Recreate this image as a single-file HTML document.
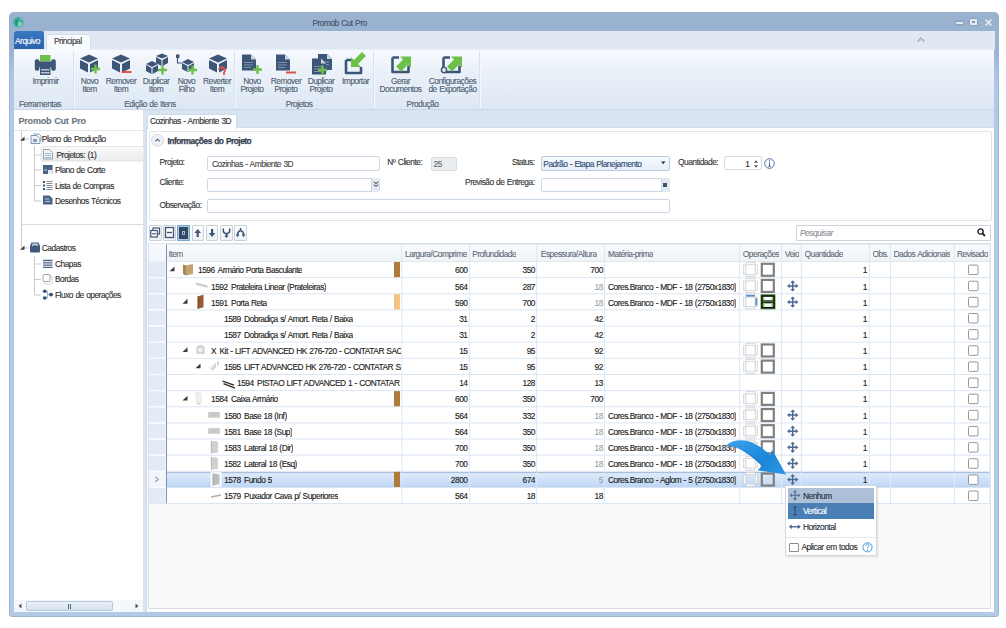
<!DOCTYPE html><html><head><meta charset="utf-8"><style>
*{box-sizing:border-box;margin:0;padding:0}
html,body{width:1006px;height:628px;overflow:hidden;background:#fff;font-family:"Liberation Sans",sans-serif;font-size:8.4px;letter-spacing:-0.5px;word-spacing:0.6px;color:#1e1e1e;-webkit-text-stroke:0.12px currentColor}
.a{position:absolute}
.t{position:absolute;white-space:nowrap;line-height:10px}
svg{position:absolute;overflow:visible}
#win{left:9px;top:12px;width:990px;height:605px;background:linear-gradient(#98b2d0 0,#98b2d0 36px,#b2cae6 70px,#b2cae6);border-radius:5px 5px 3px 3px;border:1px solid #9cb4d2}
#title{left:9px;top:12px;width:990px;height:19px;background:#98b2d0;border-radius:5px 5px 0 0}
#tabrow{left:14px;top:31px;width:981px;height:19px;background:#dfe8f3}
#ribbon{left:14px;top:49px;width:980px;height:61px;background:linear-gradient(#f7fafe,#ebf1f9 35%,#dee8f4);border-bottom:1px solid #c6d6e9;border-top:1px solid #e6edf6}
.sep{position:absolute;top:51px;width:1px;height:57px;background:#d8e2ee;box-shadow:1px 0 0 #f4f8fc}
.rl{color:#4d5d72}
.gl{color:#4d5d72}
#below{left:14px;top:110px;width:980px;height:502px;background:#d9e4f1}
#lp{left:14px;top:110px;width:129px;height:502px;background:#fff}
#mp{left:146px;top:127px;width:848px;height:485px;background:#fff;border-left:1px solid #c9d8ea;border-top:1px solid #cfdcec}
</style></head><body>
<div class="a" id="win"></div><div class="a" id="title"></div><div class="a" id="tabrow"></div><div class="a" id="ribbon"></div>
<div class="a" id="below"></div><div class="a" id="lp"></div><div class="a" id="mp"></div>
<svg style="left:12.5px;top:17px" width="11" height="11" viewBox="0 0 11 11"><circle cx="5.3" cy="5.3" r="4.8" fill="#8fd0c0" stroke="#2aa58c" stroke-width="0.9"/><path d="M2.2 2.5 Q4.5 0.8 7 1.5 L6.5 4 L5 5.5 L5.5 8 L3.5 9.3 Q1 7.5 1.2 5 Z" fill="#1f9f86"/><path d="M7.5 2.5 L9.3 4 L8.5 6 L7.2 5 Z" fill="#1f9f86"/></svg>
<div class="t " style="left:279.50px;width:120px;text-align:center;top:17.50px;color:#44546a">Promob Cut Pro</div>
<div class="a" style="left:956px;top:22px;width:7px;height:2px;background:#e4eaf1;box-shadow:0 0 1px 0.3px #6b7d94"></div>
<div class="a" style="left:970px;top:19px;width:7px;height:6px;border:2px solid #e4eaf1;box-shadow:0 0 1px 0.3px #6b7d94, inset 0 0 1px 0.3px #6b7d94"></div>
<svg style="left:985px;top:19px" width="7" height="7" viewBox="0 0 7 7"><path d="M0.5 0.5 L6.5 6.5 M6.5 0.5 L0.5 6.5" stroke="#e4eaf1" stroke-width="1.8" style="filter:drop-shadow(0 0 0.6px #6b7d94)"/></svg>
<div class="a" style="left:14px;top:31px;width:30px;height:18px;background:linear-gradient(#3a78c2,#2a62ad);border-radius:2px 2px 0 0"></div>
<div class="t " style="left:15px;top:35.50px;color:#fff">Arquivo</div>
<div class="a" style="left:46px;top:34px;width:45px;height:16px;background:#f8fbfe;border:1px solid #d2deec;border-bottom:none;border-radius:2px 2px 0 0"></div>
<div class="t " style="left:54px;top:36.00px;color:#3a3a3a">Principal</div>
<svg style="left:917px;top:37px" width="8" height="5" viewBox="0 0 8 5"><path d="M0.5 4.5 L4 1 L7.5 4.5" fill="none" stroke="#a3a8ae" stroke-width="1.2"/><path d="M2 4.8 L4 2.8 L6 4.8" fill="none" stroke="#c5c9ce" stroke-width="0.8"/></svg>
<div class="sep" style="left:73px"></div>
<div class="sep" style="left:234px"></div>
<div class="sep" style="left:373px"></div>
<div class="sep" style="left:479px"></div>
<svg style="left:0;top:0" width="1006" height="130"><rect x="40" y="55" width="10.5" height="6.5" fill="#6cc04a"/><rect x="34.8" y="59.3" width="4.6" height="11.5" rx="2" fill="#3d5677"/><rect x="51.2" y="59.3" width="4.6" height="11.5" rx="2" fill="#3d5677"/><rect x="36" y="61.5" width="18.5" height="5.5" fill="#3d5677"/><rect x="40" y="67" width="10.5" height="8" fill="#3d5677"/><rect x="41" y="69" width="8.5" height="1.5" fill="#b9c6d6"/><rect x="41" y="72" width="8.5" height="1.5" fill="#b9c6d6"/><path d="M89 54.5 L98 58.5 L89 62.5 L80 58.5 Z" fill="#3d5677"/><path d="M80 60.0 L88 64.0 L88 72.5 L80 68.5 Z" fill="#3d5677"/><path d="M90 64.0 L98 60.0 L98 68.5 L90 72.5 Z" fill="#3d5677"/><rect x="90" y="64" width="11" height="11" fill="#e9f0f8" opacity="0"/><path d="M91 69 H100 M95.5 64.5 V73.5" stroke="#6cc04a" stroke-width="2.4"/><path d="M121 54.5 L130 58.5 L121 62.5 L112 58.5 Z" fill="#3d5677"/><path d="M112 60.0 L120 64.0 L120 72.5 L112 68.5 Z" fill="#3d5677"/><path d="M122 64.0 L130 60.0 L130 68.5 L122 72.5 Z" fill="#3d5677"/><path d="M121.5 72 H131.5" stroke="#e0524a" stroke-width="2"/><path d="M146 64 L152 61 L158 64 L152 67 Z M146 65 L151.5 68 L151.5 74 L146 71 Z M152.5 68 L158 65 L158 71 L152.5 74 Z" fill="#3d5677"/><path d="M156 56 L162 53.5 L168 56 L162 58.5 Z M156 57 L161.5 60 L161.5 66 L156 63 Z M162.5 60 L168 57 L168 63 L162.5 66 Z" fill="#3d5677"/><path d="M158 70 H167 M162.5 65.5 V74.5" stroke="#6cc04a" stroke-width="2.4"/><rect x="176" y="54.5" width="3.5" height="3.5" fill="#3d5677"/><path d="M177.5 58 V63 H182" stroke="#3d5677" stroke-width="1.2" fill="none"/><path d="M182 62 L188 59 L194 62 L188 65 Z M182 63 L187.5 66 L187.5 72 L182 69 Z M188.5 66 L194 63 L194 69 L188.5 72 Z" fill="#3d5677"/><path d="M188 70 H197 M192.5 65.5 V74.5" stroke="#6cc04a" stroke-width="2.4"/><path d="M218 54.5 L227 58.5 L218 62.5 L209 58.5 Z" fill="#3d5677"/><path d="M209 60.0 L217 64.0 L217 72.5 L209 68.5 Z" fill="#3d5677"/><path d="M219 64.0 L227 60.0 L227 68.5 L219 72.5 Z" fill="#3d5677"/><path d="M219 70 A3 3 0 1 1 224 72.5 V75" stroke="#e0524a" stroke-width="1.8" fill="none"/><path d="M242 54.5 H251 L256 59.5 V70.5 H242 Z" fill="#3d5677"/><path d="M251 54.5 V59.5 H256" fill="#c9d5e3"/><path d="M244 62.5 H253 M244 65.0 H253 M244 67.5 H251" stroke="#8ea3bd" stroke-width="0.8"/><path d="M253 69.5 H262 M257.5 65.0 V74.0" stroke="#6cc04a" stroke-width="2.4"/><path d="M276 54.5 H285 L290 59.5 V70.5 H276 Z" fill="#3d5677"/><path d="M285 54.5 V59.5 H290" fill="#c9d5e3"/><path d="M278 62.5 H287 M278 65.0 H287 M278 67.5 H285" stroke="#8ea3bd" stroke-width="0.8"/><path d="M286 72.5 H296" stroke="#e0524a" stroke-width="2"/><path d="M318 54 H327 L332 59 V70 H318 Z" fill="#3d5677"/><path d="M327 54 V59 H332" fill="#c9d5e3"/><path d="M320 62 H329 M320 64.5 H329 M320 67 H327" stroke="#8ea3bd" stroke-width="0.8"/><path d="M312 58.5 H321 L326 63.5 V74.5 H312 Z" fill="#3d5677"/><path d="M321 58.5 V63.5 H326" fill="#c9d5e3"/><path d="M314 66.5 H323 M314 69.0 H323 M314 71.5 H321" stroke="#8ea3bd" stroke-width="0.8"/><path d="M318 70 H327 M322.5 65.5 V74.5" stroke="#6cc04a" stroke-width="2.4"/><path d="M346 60 H352 M346 60 V73 H361 V67" stroke="#3d5677" stroke-width="2.6" fill="none" stroke-linejoin="round"/><path d="M366 56 L358 64 L361 67 L351 67 L351 57 L354 60 L362 52 Z" fill="#6cc04a" transform="rotate(0)"/><path d="M392.5 57.5 H399 M392.5 57.5 V72.0 H408.5 V65.5" stroke="#3d5677" stroke-width="2.6" fill="none" stroke-linejoin="round"/><path d="M396 66.5 L403 59.5 L400 56.5 H411 V67.5 L408 64.5 L401 71.5 Z" fill="#6cc04a"/><path d="M443.5 57.5 H450 M443.5 57.5 V72.0 H459.5 V65.5" stroke="#3d5677" stroke-width="2.6" fill="none" stroke-linejoin="round"/><path d="M447 66.5 L454 59.5 L451 56.5 H462 V67.5 L459 64.5 L452 71.5 Z" fill="#6cc04a"/><circle cx="444" cy="70.0" r="2.6" fill="#e4ecf5" stroke="#3d5677" stroke-width="1.4"/></svg>
<div class="t rl" style="left:-14.50px;width:120px;text-align:center;top:75.50px;">Imprimir</div>
<div class="t rl" style="left:29.50px;width:120px;text-align:center;top:75.50px;">Novo</div>
<div class="t rl" style="left:29.50px;width:120px;text-align:center;top:84.00px;">Item</div>
<div class="t rl" style="left:61.00px;width:120px;text-align:center;top:75.50px;">Remover</div>
<div class="t rl" style="left:61.00px;width:120px;text-align:center;top:84.00px;">Item</div>
<div class="t rl" style="left:96.00px;width:120px;text-align:center;top:75.50px;">Duplicar</div>
<div class="t rl" style="left:96.00px;width:120px;text-align:center;top:84.00px;">Item</div>
<div class="t rl" style="left:126.50px;width:120px;text-align:center;top:75.50px;">Novo</div>
<div class="t rl" style="left:126.50px;width:120px;text-align:center;top:84.00px;">Filho</div>
<div class="t rl" style="left:157.00px;width:120px;text-align:center;top:75.50px;">Reverter</div>
<div class="t rl" style="left:157.00px;width:120px;text-align:center;top:84.00px;">Item</div>
<div class="t rl" style="left:192.00px;width:120px;text-align:center;top:75.50px;">Novo</div>
<div class="t rl" style="left:192.00px;width:120px;text-align:center;top:84.00px;">Projeto</div>
<div class="t rl" style="left:226.00px;width:120px;text-align:center;top:75.50px;">Remover</div>
<div class="t rl" style="left:226.00px;width:120px;text-align:center;top:84.00px;">Projeto</div>
<div class="t rl" style="left:261.00px;width:120px;text-align:center;top:75.50px;">Duplicar</div>
<div class="t rl" style="left:261.00px;width:120px;text-align:center;top:84.00px;">Projeto</div>
<div class="t rl" style="left:295.50px;width:120px;text-align:center;top:75.50px;">Importar</div>
<div class="t rl" style="left:340.50px;width:120px;text-align:center;top:75.50px;">Gerar</div>
<div class="t rl" style="left:340.50px;width:120px;text-align:center;top:84.00px;">Documentos</div>
<div class="t rl" style="left:392.50px;width:120px;text-align:center;top:75.50px;">Configurações</div>
<div class="t rl" style="left:392.50px;width:120px;text-align:center;top:84.00px;">de Exportação</div>
<div class="t gl" style="left:-20.00px;width:120px;text-align:center;top:98.50px;">Ferramentas</div>
<div class="t gl" style="left:90.00px;width:120px;text-align:center;top:98.50px;">Edição de Itens</div>
<div class="t gl" style="left:239.00px;width:120px;text-align:center;top:98.50px;">Projetos</div>
<div class="t gl" style="left:362.50px;width:120px;text-align:center;top:98.50px;">Produção</div>
<div class="t " style="left:18.5px;top:115.80px;font-weight:bold;font-size:9px;letter-spacing:-0.2px;color:#6b7786">Promob Cut Pro</div>
<div class="a" style="left:14px;top:130px;width:129px;height:1px;background:#dfe6ee"></div>
<svg style="left:0;top:0" width="150" height="620"><path d="M21.5 131 V248 M34.5 146 V201 M34.5 155 H41 M34.5 170 H41 M34.5 185.5 H41 M34.5 201 H41 M24 139 H29 M24 248 H29 M34.5 256 V295 M34.5 264 H41 M34.5 279.5 H41 M34.5 295 H41" stroke="#c9c9c9" stroke-width="1" fill="none"/><path d="M21.5 224.5 H143" stroke="#dcdcdc" stroke-width="1"/><path d="M24.5 136.5 V140.8 H20 Z" fill="#404040"/><path d="M24.5 245.5 V249.8 H20 Z" fill="#404040"/><rect x="41" y="146.5" width="103" height="14.5" rx="2" fill="url(#hl)" stroke="#dddddd" stroke-width="0.8"/><defs><linearGradient id="hl" x1="0" y1="0" x2="0" y2="1"><stop offset="0" stop-color="#f9f9f9"/><stop offset="1" stop-color="#ececec"/></linearGradient></defs><path d="M31 135.5 H37 L40 138.5 V143.5 H31 Z" fill="#eef2f7" stroke="#8297b2" stroke-width="1"/><path d="M33 134 H39 L41 136 V141" fill="none" stroke="#8297b2" stroke-width="0.9"/><rect x="33" y="139" width="4" height="3" fill="#8aa0bb"/><path d="M43.5 149.5 H49.5 L52.5 152.5 V159 H43.5 Z" fill="#f4f6f9" stroke="#8ea2bb" stroke-width="1"/><path d="M45 153.5 H51 M45 155.5 H51 M45 157.5 H51" stroke="#8ea2bb" stroke-width="0.8"/><rect x="43" y="165" width="9.5" height="9" fill="#4b6486"/><rect x="48" y="170" width="4.5" height="4" fill="#e6ecf3"/><rect x="44" y="169.5" width="3" height="1" fill="#c4d0de"/><path d="M43 182 H45 M43 185.5 H45 M43 189 H45" stroke="#3d5677" stroke-width="1.8"/><path d="M46.5 181.5 H52.5 M46.5 183.5 H52.5 M46.5 185.5 H52.5 M46.5 187.5 H52.5 M46.5 189.5 H52.5" stroke="#5a6f8c" stroke-width="0.8"/><path d="M43 195.5 H49.5 L52.5 198.5 V204.5 H43 Z" fill="#4b6486" rx="2"/><path d="M45 199 H49 M45 201.5 H50" stroke="#c9d4e2" stroke-width="0.9"/><path d="M30 246 L31.5 242.5 H38.5 L40 246 V251.5 Q40 252.5 39 252.5 H31 Q30 252.5 30 251.5 Z" fill="#3f5a7e"/><path d="M31.8 246.3 Q35 244.3 38.2 246.3 L37.5 243.5 H32.5 Z" fill="#c9d4e2"/><path d="M43 260.5 H52.5 M43 262.8 H52.5 M43 265.1 H52.5 M43 267.4 H52.5" stroke="#4d6585" stroke-width="1.3"/><rect x="44.5" y="276" width="7.5" height="8" rx="1" fill="#fff" stroke="#a7b3c2" stroke-width="0.9" stroke-dasharray="1.4 0.8"/><rect x="43" y="274.5" width="7" height="7" rx="1" fill="#fff" stroke="#8e9db0" stroke-width="0.9"/><path d="M45 291.5 H47.5 V297.5 H45 M47.5 294.5 H50" stroke="#8ea0b6" stroke-width="0.8" fill="none"/><ellipse cx="44.8" cy="291.3" rx="2" ry="1.7" fill="#3d5677"/><ellipse cx="44.8" cy="298" rx="2" ry="1.7" fill="#3d5677"/><ellipse cx="51" cy="294.6" rx="2.1" ry="1.9" fill="#3d5677"/></svg>
<div class="t " style="left:41.8px;top:134.00px;color:#2f2f2f">Plano de Produção</div>
<div class="t " style="left:56.5px;top:150.00px;color:#2f2f2f">Projetos: (1)</div>
<div class="t " style="left:55px;top:165.00px;color:#2f2f2f">Plano de Corte</div>
<div class="t " style="left:55px;top:180.60px;color:#2f2f2f">Lista de Compras</div>
<div class="t " style="left:55px;top:196.00px;color:#2f2f2f">Desenhos Técnicos</div>
<div class="t " style="left:41.8px;top:243.00px;color:#2f2f2f">Cadastros</div>
<div class="t " style="left:55px;top:259.00px;color:#2f2f2f">Chapas</div>
<div class="t " style="left:55px;top:274.40px;color:#2f2f2f">Bordas</div>
<div class="t " style="left:55px;top:290.20px;color:#2f2f2f">Fluxo de operações</div>
<div class="a" style="left:14px;top:600px;width:129px;height:12px;background:#f4f7fb"></div>
<div class="a" style="left:26px;top:601px;width:87px;height:10px;border-radius:2px;background:linear-gradient(#eaf1fa,#d6e2f0);border:1px solid #b9c9dc"></div>
<div class="a" style="left:68px;top:603.5px;width:3px;height:5px;border-left:1px solid #51647c;border-right:1px solid #51647c"></div>
<svg style="left:18px;top:603px" width="4" height="6"><path d="M3.5 0.5 V5.5 L0.5 3 Z" fill="#555"/></svg>
<svg style="left:135px;top:603px" width="4" height="6"><path d="M0.5 0.5 V5.5 L3.5 3 Z" fill="#555"/></svg>
<div class="a" style="left:146.5px;top:113.5px;width:90px;height:15px;background:#fdfeff;border:1px solid #cfdcec;border-bottom:none;border-radius:1px 1px 0 0"></div>
<div class="t " style="left:150px;top:116.00px;color:#333">Cozinhas - Ambiente 3D</div>
<div class="a" style="left:148.5px;top:131px;width:843px;height:90px;background:#fff;border:1px solid #dfe4ea;border-radius:2px"></div>
<svg style="left:151px;top:134px" width="13" height="13"><circle cx="6.5" cy="6.3" r="6" fill="#eef2f8" stroke="#c6d2e0" stroke-width="0.8"/><path d="M4.3 7.3 L6.5 5.2 L8.7 7.3" fill="none" stroke="#4a5568" stroke-width="1.1"/></svg>
<div class="t " style="left:167.5px;top:135.50px;font-weight:bold;color:#35404f;-webkit-text-stroke:0.25px #35404f">Informações do Projeto</div>
<div class="t " style="left:159.5px;top:156.80px;color:#333">Projeto:</div>
<div class="t " style="left:159.5px;top:177.00px;color:#333">Cliente:</div>
<div class="t " style="left:159.5px;top:199.60px;color:#333">Observação:</div>
<div class="a" style="left:207px;top:156px;width:172.5px;height:14.5px;background:#fff;border:1px solid #ccd8e6;border-radius:2px"></div>
<div class="t " style="left:212px;top:159.00px;color:#444">Cozinhas - Ambiente 3D</div>
<div class="a" style="left:207px;top:177.5px;width:172.5px;height:14.5px;background:#fff;border:1px solid #ccd8e6;border-radius:2px"></div>
<div class="a" style="left:371px;top:178px;width:8px;height:13.5px;background:#e3eaf3;border-left:1px solid #c5d3e3"></div>
<svg style="left:372.5px;top:181px" width="6" height="7"><path d="M0.8 0.8 L3 2.6 L5.2 0.8 M0.8 3.6 L3 5.4 L5.2 3.6" fill="none" stroke="#333" stroke-width="1"/></svg>
<div class="a" style="left:207px;top:199px;width:463px;height:14px;background:#fff;border:1px solid #ccd8e6;border-radius:2px"></div>
<div class="t " style="left:387.3px;top:156.80px;color:#333">Nº Cliente:</div>
<div class="a" style="left:430.5px;top:156.5px;width:26px;height:14px;background:#eaedf0;border:1px solid #d6dce3;border-radius:2px"></div>
<div class="t " style="left:433.5px;top:158.50px;color:#666">25</div>
<div class="t " style="right:471.50px;top:156.80px;color:#333">Status:</div>
<div class="t " style="right:471.50px;top:177.00px;color:#333">Previsão de Entrega:</div>
<div class="a" style="left:541px;top:156px;width:129px;height:14.5px;background:linear-gradient(#f7faff,#e6eef9);border:1px solid #b9cbe2;border-radius:2px"></div>
<div class="t " style="left:543.3px;top:158.80px;color:#2c4a70">Padrão - Etapa Planejamento</div>
<svg style="left:661px;top:161px" width="5" height="4"><path d="M0 0.5 H4.5 L2.25 3.2 Z" fill="#333"/></svg>
<div class="a" style="left:541px;top:177.5px;width:129px;height:14.5px;background:#fff;border:1px solid #ccd8e6;border-radius:2px"></div>
<div class="a" style="left:661px;top:178px;width:8.5px;height:13.5px;background:#e2e9f1;border-left:1px solid #cfd9e5"></div>
<div class="a" style="left:663px;top:182.5px;width:4px;height:4px;background:#40546e"></div>
<div class="t " style="left:678px;top:156.80px;color:#333">Quantidade:</div>
<div class="a" style="left:724px;top:156.3px;width:38px;height:14px;background:#fff;border:1px solid #d3dbe5;border-radius:2px"></div>
<div class="t " style="right:256.50px;top:158.80px;color:#1e1e1e">1</div>
<svg style="left:753px;top:158.5px" width="6" height="10"><path d="M1 3.8 L3 1.3 L5 3.8 Z M1 6.2 L3 8.7 L5 6.2 Z" fill="#555"/></svg>
<svg style="left:763.5px;top:157.5px" width="12" height="12"><circle cx="5.5" cy="5.5" r="4.8" fill="#fff" stroke="#4a6fa0" stroke-width="1"/><path d="M5.5 4.3 V8.3 M4.3 8.3 H6.8" stroke="#4a6fa0" stroke-width="1"/><circle cx="5.5" cy="2.7" r="0.7" fill="#4a6fa0"/></svg>
<div class="a" style="left:149.2px;top:224.5px;width:12.5px;height:16.3px;background:linear-gradient(#fefefe,#eef1f4);border:1px solid #c9cfd6;border-radius:1px"></div>
<div class="a" style="left:163.1px;top:224.5px;width:12.5px;height:16.3px;background:linear-gradient(#fefefe,#eef1f4);border:1px solid #c9cfd6;border-radius:1px"></div>
<div class="a" style="left:177.2px;top:224.5px;width:12.5px;height:16.3px;background:#a9cbe8;border:1px solid #7aa8d2"></div>
<div class="a" style="left:179.2px;top:227px;width:8.5px;height:11.5px;background:#34495f"></div>
<div class="a" style="left:181.7px;top:230.5px;width:3.5px;height:4px;border:1px solid #a9b8c8"></div>
<div class="a" style="left:191.5px;top:224.5px;width:12.5px;height:16.3px;background:linear-gradient(#fefefe,#eef1f4);border:1px solid #c9cfd6;border-radius:1px"></div>
<div class="a" style="left:205.9px;top:224.5px;width:12.5px;height:16.3px;background:linear-gradient(#fefefe,#eef1f4);border:1px solid #c9cfd6;border-radius:1px"></div>
<div class="a" style="left:220.2px;top:224.5px;width:12.5px;height:16.3px;background:linear-gradient(#fefefe,#eef1f4);border:1px solid #c9cfd6;border-radius:1px"></div>
<div class="a" style="left:234.3px;top:224.5px;width:12.5px;height:16.3px;background:linear-gradient(#fefefe,#eef1f4);border:1px solid #c9cfd6;border-radius:1px"></div>
<svg style="left:0;top:0" width="260" height="250"><rect x="153" y="228" width="6.5" height="6" fill="none" stroke="#3d5677" stroke-width="1.2"/><rect x="150.8" y="230.5" width="6.5" height="6.5" fill="#fff" stroke="#3d5677" stroke-width="1.2"/><path d="M152 233.8 H156" stroke="#3d5677" stroke-width="1.1"/><rect x="165.5" y="227.5" width="8" height="10" fill="none" stroke="#3d5677" stroke-width="1.3"/><path d="M167 232.5 H172" stroke="#3d5677" stroke-width="1.3"/><path d="M197.7 229 L201 233 H198.8 V237 H196.6 V233 H194.4 Z" fill="#3d5677"/><path d="M212.1 237 L215.4 233 H213.2 V229 H211 V233 H208.8 Z" fill="#3d5677"/><path d="M223.3 228.5 V231 Q223.3 233 226.5 233.8 Q229.7 233 229.7 231 V228.5" stroke="#3d5677" stroke-width="1.5" fill="none"/><path d="M226.5 233.5 V236" stroke="#3d5677" stroke-width="1.6"/><path d="M224.3 235.5 H228.7 L226.5 238 Z" fill="#3d5677"/><path d="M240.6 228 V231 M240.6 230.5 Q237.6 231.5 237.6 234.5 M240.6 230.5 Q243.6 231.5 243.6 234.5" stroke="#3d5677" stroke-width="1.5" fill="none"/><path d="M235.8 234.3 H239.4 L237.6 237.5 Z M241.8 234.3 H245.4 L243.6 237.5 Z" fill="#3d5677"/></svg>
<div class="a" style="left:796px;top:224.5px;width:195px;height:16px;background:#fff;border:1px solid #c9d3de;border-radius:1px"></div>
<div class="t " style="left:800px;top:227.50px;font-style:italic;color:#8a8f96">Pesquisar</div>
<svg style="left:977px;top:228px" width="9" height="9"><circle cx="3.5" cy="3.5" r="2.6" fill="none" stroke="#222" stroke-width="1.4"/><path d="M5.5 5.5 L8 8" stroke="#222" stroke-width="1.8"/></svg>
<div class="a" style="left:148px;top:243px;width:843px;height:366px;background:#fafafa;border:1px solid #dadde2"></div>
<div class="a" style="left:149px;top:243.5px;width:841px;height:260.10px;background:#fff"></div>
<div class="a" style="left:149px;top:243.5px;width:841px;height:18.0px;background:linear-gradient(#f9fbfd,#eef3f8);border-top:1px solid #e3e9f0;border-bottom:1px solid #dfe7f0"></div>
<div class="t" style="left:168.5px;top:248.5px;max-width:232.3px;overflow:hidden;color:#616b78">Item</div>
<div class="t" style="left:405px;top:248.5px;max-width:63.6px;overflow:hidden;color:#616b78">Largura/Comprime</div>
<div class="t" style="left:472.3px;top:248.5px;max-width:63.4px;overflow:hidden;color:#616b78">Profundidade</div>
<div class="t" style="left:540.8px;top:248.5px;max-width:62.8px;overflow:hidden;color:#616b78">Espessura/Altura</div>
<div class="t" style="left:608px;top:248.5px;max-width:130.7px;overflow:hidden;color:#616b78">Matéria-prima</div>
<div class="t" style="left:742.8px;top:248.5px;max-width:37.8px;overflow:hidden;color:#616b78">Operações</div>
<div class="t" style="left:784.8px;top:248.5px;max-width:15.5px;overflow:hidden;color:#616b78">Veio</div>
<div class="t" style="left:804.5px;top:248.5px;max-width:63.9px;overflow:hidden;color:#616b78">Quantidade</div>
<div class="t" style="left:872.5px;top:248.5px;max-width:17.0px;overflow:hidden;color:#616b78">Obs.</div>
<div class="t" style="left:893.5px;top:248.5px;max-width:59.9px;overflow:hidden;color:#616b78">Dados Adicionais</div>
<div class="t" style="left:957px;top:248.5px;max-width:32.0px;overflow:hidden;color:#616b78">Revisado</div>
<svg style="left:0;top:0" width="1006" height="628"><rect x="149" y="262.00" width="16.5" height="15.14" fill="#e4ebf6"/><rect x="149" y="278.14" width="16.5" height="15.14" fill="#e4ebf6"/><rect x="149" y="294.28" width="16.5" height="15.14" fill="#e4ebf6"/><rect x="149" y="310.42" width="16.5" height="15.14" fill="#e4ebf6"/><rect x="149" y="326.56" width="16.5" height="15.14" fill="#e4ebf6"/><rect x="149" y="342.70" width="16.5" height="15.14" fill="#e4ebf6"/><rect x="149" y="358.84" width="16.5" height="15.14" fill="#e4ebf6"/><rect x="149" y="374.98" width="16.5" height="15.14" fill="#e4ebf6"/><rect x="149" y="391.12" width="16.5" height="15.14" fill="#e4ebf6"/><rect x="149" y="407.26" width="16.5" height="15.14" fill="#e4ebf6"/><rect x="149" y="423.40" width="16.5" height="15.14" fill="#e4ebf6"/><rect x="149" y="439.54" width="16.5" height="15.14" fill="#e4ebf6"/><rect x="149" y="455.68" width="16.5" height="15.14" fill="#e4ebf6"/><rect x="149" y="471.82" width="16.5" height="15.14" fill="#e4ebf6"/><rect x="149" y="487.96" width="16.5" height="15.14" fill="#e4ebf6"/><rect x="149" y="243.5" width="17" height="18.0" fill="#f4f7fb"/><defs><linearGradient id="sg" x1="0" y1="0" x2="0" y2="1"><stop offset="0" stop-color="#e1ecfa"/><stop offset="1" stop-color="#bcd6f6"/></linearGradient></defs><rect x="166.5" y="472.32" width="823.5" height="15.14" fill="url(#sg)"/><path d="M166.5 472.62 H990" stroke="#a0badb" stroke-width="1"/><path d="M166.5 487.36 H990" stroke="#b3cae6" stroke-width="1"/><rect x="149" y="471.82" width="16.5" height="15.14" fill="#f2f6fb"/><path d="M155 476.82 L158.5 479.32 L155 481.82" stroke="#6b86a8" stroke-width="1" fill="none"/><path d="M166 277.64 H990" stroke="#dbe6f3" stroke-width="1"/><path d="M149 277.64 H166" stroke="#fbfcfe" stroke-width="1"/><path d="M166 293.78 H990" stroke="#dbe6f3" stroke-width="1"/><path d="M149 293.78 H166" stroke="#fbfcfe" stroke-width="1"/><path d="M166 309.92 H990" stroke="#dbe6f3" stroke-width="1"/><path d="M149 309.92 H166" stroke="#fbfcfe" stroke-width="1"/><path d="M166 326.06 H990" stroke="#dbe6f3" stroke-width="1"/><path d="M149 326.06 H166" stroke="#fbfcfe" stroke-width="1"/><path d="M166 342.20 H990" stroke="#dbe6f3" stroke-width="1"/><path d="M149 342.20 H166" stroke="#fbfcfe" stroke-width="1"/><path d="M166 358.34 H990" stroke="#dbe6f3" stroke-width="1"/><path d="M149 358.34 H166" stroke="#fbfcfe" stroke-width="1"/><path d="M166 374.48 H990" stroke="#dbe6f3" stroke-width="1"/><path d="M149 374.48 H166" stroke="#fbfcfe" stroke-width="1"/><path d="M166 390.62 H990" stroke="#dbe6f3" stroke-width="1"/><path d="M149 390.62 H166" stroke="#fbfcfe" stroke-width="1"/><path d="M166 406.76 H990" stroke="#dbe6f3" stroke-width="1"/><path d="M149 406.76 H166" stroke="#fbfcfe" stroke-width="1"/><path d="M166 422.90 H990" stroke="#dbe6f3" stroke-width="1"/><path d="M149 422.90 H166" stroke="#fbfcfe" stroke-width="1"/><path d="M166 439.04 H990" stroke="#dbe6f3" stroke-width="1"/><path d="M149 439.04 H166" stroke="#fbfcfe" stroke-width="1"/><path d="M166 455.18 H990" stroke="#dbe6f3" stroke-width="1"/><path d="M149 455.18 H166" stroke="#fbfcfe" stroke-width="1"/><path d="M166 471.32 H990" stroke="#dbe6f3" stroke-width="1"/><path d="M149 471.32 H166" stroke="#fbfcfe" stroke-width="1"/><path d="M166 487.46 H990" stroke="#dbe6f3" stroke-width="1"/><path d="M149 487.46 H166" stroke="#fbfcfe" stroke-width="1"/><path d="M166 503.60 H990" stroke="#dbe6f3" stroke-width="1"/><path d="M149 503.60 H166" stroke="#fbfcfe" stroke-width="1"/><path d="M401.8 243.5 V261.5" stroke="#e0e6ee" stroke-width="1"/><path d="M401.8 261.5 V503.60" stroke="#dde8f4" stroke-width="1"/><path d="M469.6 243.5 V261.5" stroke="#e0e6ee" stroke-width="1"/><path d="M469.6 261.5 V503.60" stroke="#dde8f4" stroke-width="1"/><path d="M536.7 243.5 V261.5" stroke="#e0e6ee" stroke-width="1"/><path d="M536.7 261.5 V503.60" stroke="#dde8f4" stroke-width="1"/><path d="M604.6 243.5 V261.5" stroke="#e0e6ee" stroke-width="1"/><path d="M604.6 261.5 V503.60" stroke="#dde8f4" stroke-width="1"/><path d="M739.7 243.5 V261.5" stroke="#e0e6ee" stroke-width="1"/><path d="M739.7 261.5 V503.60" stroke="#dde8f4" stroke-width="1"/><path d="M781.6 243.5 V261.5" stroke="#e0e6ee" stroke-width="1"/><path d="M781.6 261.5 V503.60" stroke="#dde8f4" stroke-width="1"/><path d="M801.3 243.5 V261.5" stroke="#e0e6ee" stroke-width="1"/><path d="M801.3 261.5 V503.60" stroke="#dde8f4" stroke-width="1"/><path d="M869.4 243.5 V261.5" stroke="#e0e6ee" stroke-width="1"/><path d="M869.4 261.5 V503.60" stroke="#dde8f4" stroke-width="1"/><path d="M890.5 243.5 V261.5" stroke="#e0e6ee" stroke-width="1"/><path d="M890.5 261.5 V503.60" stroke="#dde8f4" stroke-width="1"/><path d="M954.4 243.5 V261.5" stroke="#e0e6ee" stroke-width="1"/><path d="M954.4 261.5 V503.60" stroke="#dde8f4" stroke-width="1"/><path d="M990 243.5 V261.5" stroke="#e0e6ee" stroke-width="1"/><path d="M990 261.5 V503.60" stroke="#dde8f4" stroke-width="1"/><path d="M166.5 244.5 V503.60" stroke="#7f93ad" stroke-width="1"/><path d="M149 503.60 H990" stroke="#dbe6f3" stroke-width="1"/></svg>
<div class="t" style="left:198.0px;top:265.37px;max-width:193.8px;overflow:hidden;color:#1a1a1a"><span style="margin-right:1px">1596</span> Armário Porta Basculante</div>
<div class="t " style="right:538.50px;top:265.37px;color:#1a1a1a">600</div>
<div class="t " style="right:471.00px;top:265.37px;color:#1a1a1a">350</div>
<div class="t " style="right:403.20px;top:265.37px;color:#1a1a1a">700</div>
<div class="t " style="right:139.20px;top:265.37px;color:#1a1a1a">1</div>
<div class="t" style="left:211.0px;top:281.51px;max-width:189.8px;overflow:hidden;color:#1a1a1a"><span style="margin-right:1px">1592</span> Prateleira Linear (Prateleiras)</div>
<div class="t " style="right:538.50px;top:281.51px;color:#1a1a1a">564</div>
<div class="t " style="right:471.00px;top:281.51px;color:#1a1a1a">287</div>
<div class="t " style="right:403.20px;top:281.51px;color:#a0a0a0">18</div>
<div class="t" style="left:608px;top:281.51px;max-width:131px;overflow:hidden;color:#1a1a1a">Cores.Branco - MDF - 18 (2750x1830)</div>
<div class="t " style="right:139.20px;top:281.51px;color:#1a1a1a">1</div>
<div class="t" style="left:211.0px;top:297.65px;max-width:180.8px;overflow:hidden;color:#1a1a1a"><span style="margin-right:1px">1591</span> Porta Reta</div>
<div class="t " style="right:538.50px;top:297.65px;color:#1a1a1a">590</div>
<div class="t " style="right:471.00px;top:297.65px;color:#1a1a1a">700</div>
<div class="t " style="right:403.20px;top:297.65px;color:#a0a0a0">18</div>
<div class="t" style="left:608px;top:297.65px;max-width:131px;overflow:hidden;color:#1a1a1a">Cores.Branco - MDF - 18 (2750x1830)</div>
<div class="t " style="right:139.20px;top:297.65px;color:#1a1a1a">1</div>
<div class="t" style="left:224.0px;top:313.79px;max-width:176.8px;overflow:hidden;color:#1a1a1a"><span style="margin-right:1px">1589</span> Dobradiça s/ Amort. Reta / Baixa</div>
<div class="t " style="right:538.50px;top:313.79px;color:#1a1a1a">31</div>
<div class="t " style="right:471.00px;top:313.79px;color:#1a1a1a">2</div>
<div class="t " style="right:403.20px;top:313.79px;color:#1a1a1a">42</div>
<div class="t " style="right:139.20px;top:313.79px;color:#1a1a1a">1</div>
<div class="t" style="left:224.0px;top:329.93px;max-width:176.8px;overflow:hidden;color:#1a1a1a"><span style="margin-right:1px">1587</span> Dobradiça s/ Amort. Reta / Baixa</div>
<div class="t " style="right:538.50px;top:329.93px;color:#1a1a1a">31</div>
<div class="t " style="right:471.00px;top:329.93px;color:#1a1a1a">2</div>
<div class="t " style="right:403.20px;top:329.93px;color:#1a1a1a">42</div>
<div class="t " style="right:139.20px;top:329.93px;color:#1a1a1a">1</div>
<div class="t" style="left:211.0px;top:346.07px;max-width:189.8px;overflow:hidden;color:#1a1a1a"><span style="margin-right:1px">X</span> Kit - LIFT ADVANCED HK 276-720 - CONTATAR SAC P.</div>
<div class="t " style="right:538.50px;top:346.07px;color:#1a1a1a">15</div>
<div class="t " style="right:471.00px;top:346.07px;color:#1a1a1a">95</div>
<div class="t " style="right:403.20px;top:346.07px;color:#1a1a1a">92</div>
<div class="t " style="right:139.20px;top:346.07px;color:#1a1a1a">1</div>
<div class="t" style="left:224.0px;top:362.21px;max-width:176.8px;overflow:hidden;color:#1a1a1a"><span style="margin-right:1px">1595</span> LIFT ADVANCED HK 276-720 - CONTATAR SAC</div>
<div class="t " style="right:538.50px;top:362.21px;color:#1a1a1a">15</div>
<div class="t " style="right:471.00px;top:362.21px;color:#1a1a1a">95</div>
<div class="t " style="right:403.20px;top:362.21px;color:#1a1a1a">92</div>
<div class="t " style="right:139.20px;top:362.21px;color:#1a1a1a">1</div>
<div class="t" style="left:237.0px;top:378.35px;max-width:163.8px;overflow:hidden;color:#1a1a1a"><span style="margin-right:1px">1594</span> PISTAO LIFT ADVANCED 1 - CONTATAR SA</div>
<div class="t " style="right:538.50px;top:378.35px;color:#1a1a1a">14</div>
<div class="t " style="right:471.00px;top:378.35px;color:#1a1a1a">128</div>
<div class="t " style="right:403.20px;top:378.35px;color:#1a1a1a">13</div>
<div class="t " style="right:139.20px;top:378.35px;color:#1a1a1a">1</div>
<div class="t" style="left:211.0px;top:394.49px;max-width:180.8px;overflow:hidden;color:#1a1a1a"><span style="margin-right:1px">1584</span> Caixa Armário</div>
<div class="t " style="right:538.50px;top:394.49px;color:#1a1a1a">600</div>
<div class="t " style="right:471.00px;top:394.49px;color:#1a1a1a">350</div>
<div class="t " style="right:403.20px;top:394.49px;color:#1a1a1a">700</div>
<div class="t " style="right:139.20px;top:394.49px;color:#1a1a1a">1</div>
<div class="t" style="left:224.0px;top:410.63px;max-width:176.8px;overflow:hidden;color:#1a1a1a"><span style="margin-right:1px">1580</span> Base 18 (Inf)</div>
<div class="t " style="right:538.50px;top:410.63px;color:#1a1a1a">564</div>
<div class="t " style="right:471.00px;top:410.63px;color:#1a1a1a">332</div>
<div class="t " style="right:403.20px;top:410.63px;color:#a0a0a0">18</div>
<div class="t" style="left:608px;top:410.63px;max-width:131px;overflow:hidden;color:#1a1a1a">Cores.Branco - MDF - 18 (2750x1830)</div>
<div class="t " style="right:139.20px;top:410.63px;color:#1a1a1a">1</div>
<div class="t" style="left:224.0px;top:426.77px;max-width:176.8px;overflow:hidden;color:#1a1a1a"><span style="margin-right:1px">1581</span> Base 18 (Sup)</div>
<div class="t " style="right:538.50px;top:426.77px;color:#1a1a1a">564</div>
<div class="t " style="right:471.00px;top:426.77px;color:#1a1a1a">350</div>
<div class="t " style="right:403.20px;top:426.77px;color:#a0a0a0">18</div>
<div class="t" style="left:608px;top:426.77px;max-width:131px;overflow:hidden;color:#1a1a1a">Cores.Branco - MDF - 18 (2750x1830)</div>
<div class="t " style="right:139.20px;top:426.77px;color:#1a1a1a">1</div>
<div class="t" style="left:224.0px;top:442.91px;max-width:176.8px;overflow:hidden;color:#1a1a1a"><span style="margin-right:1px">1583</span> Lateral 18 (Dir)</div>
<div class="t " style="right:538.50px;top:442.91px;color:#1a1a1a">700</div>
<div class="t " style="right:471.00px;top:442.91px;color:#1a1a1a">350</div>
<div class="t " style="right:403.20px;top:442.91px;color:#a0a0a0">18</div>
<div class="t" style="left:608px;top:442.91px;max-width:131px;overflow:hidden;color:#1a1a1a">Cores.Branco - MDF - 18 (2750x1830)</div>
<div class="t " style="right:139.20px;top:442.91px;color:#1a1a1a">1</div>
<div class="t" style="left:224.0px;top:459.05px;max-width:176.8px;overflow:hidden;color:#1a1a1a"><span style="margin-right:1px">1582</span> Lateral 18 (Esq)</div>
<div class="t " style="right:538.50px;top:459.05px;color:#1a1a1a">700</div>
<div class="t " style="right:471.00px;top:459.05px;color:#1a1a1a">350</div>
<div class="t " style="right:403.20px;top:459.05px;color:#a0a0a0">18</div>
<div class="t" style="left:608px;top:459.05px;max-width:131px;overflow:hidden;color:#1a1a1a">Cores.Branco - MDF - 18 (2750x1830)</div>
<div class="t " style="right:139.20px;top:459.05px;color:#1a1a1a">1</div>
<div class="t" style="left:224.0px;top:475.19px;max-width:167.8px;overflow:hidden;color:#1a1a1a"><span style="margin-right:1px">1578</span> Fundo 5</div>
<div class="t " style="right:538.50px;top:475.19px;color:#1a1a1a">2800</div>
<div class="t " style="right:471.00px;top:475.19px;color:#1a1a1a">674</div>
<div class="t " style="right:403.20px;top:475.19px;color:#a0a0a0">5</div>
<div class="t" style="left:608px;top:475.19px;max-width:131px;overflow:hidden;color:#1a1a1a">Cores.Branco - Aglom - 5 (2750x1830)</div>
<div class="t " style="right:139.20px;top:475.19px;color:#1a1a1a">1</div>
<div class="t" style="left:224.0px;top:491.33px;max-width:176.8px;overflow:hidden;color:#1a1a1a"><span style="margin-right:1px">1579</span> Puxador Cava p/ Superiores</div>
<div class="t " style="right:538.50px;top:491.33px;color:#1a1a1a">564</div>
<div class="t " style="right:471.00px;top:491.33px;color:#1a1a1a">18</div>
<div class="t " style="right:403.20px;top:491.33px;color:#1a1a1a">18</div>
<div class="t " style="right:139.20px;top:491.33px;color:#1a1a1a">1</div>
<svg style="left:0;top:0" width="1006" height="628"><path d="M174.5 266.57 V271.37 H169.5 Z" fill="#3a3a3a"/><path d="M183.0 264.57 L186.0 265.57 V275.57 L183.0 274.07 Z" fill="#a98553"/><path d="M186.0 265.57 L193.0 264.07 V274.07 L186.0 275.57 Z" fill="#c2a173"/><rect x="394" y="262.00" width="6" height="15.14" fill="#b07a3a"/><rect x="746.0" y="262.57" width="9" height="2.2" fill="#fafafa" stroke="#cdcdcd" stroke-width="0.7"/><rect x="746.0" y="274.37" width="9" height="2.2" fill="#fafafa" stroke="#cdcdcd" stroke-width="0.7"/><rect x="743.5" y="265.07" width="2.2" height="9" fill="#fafafa" stroke="#cdcdcd" stroke-width="0.7"/><rect x="755.3" y="265.07" width="2.2" height="9" fill="#fafafa" stroke="#cdcdcd" stroke-width="0.7"/><rect x="746.0" y="264.77" width="9" height="9.6" fill="none" stroke="#dedede" stroke-width="0.6"/><rect x="761.8" y="263.77" width="12" height="12" fill="none" stroke="#808080" stroke-width="2.2"/><rect x="968.5" y="265.07" width="9.5" height="9.5" rx="1" fill="#fff" stroke="#8c8c8c" stroke-width="0.9"/><path d="M196.0 283.51 L207.5 286.51" stroke="#c9c9c9" stroke-width="2.6"/><path d="M196.0 282.51 L207.5 285.51" stroke="#ededed" stroke-width="0.8"/><rect x="746.0" y="278.71" width="9" height="2.2" fill="#fafafa" stroke="#cdcdcd" stroke-width="0.7"/><rect x="746.0" y="290.51" width="9" height="2.2" fill="#fafafa" stroke="#cdcdcd" stroke-width="0.7"/><rect x="743.5" y="281.21" width="2.2" height="9" fill="#fafafa" stroke="#cdcdcd" stroke-width="0.7"/><rect x="755.3" y="281.21" width="2.2" height="9" fill="#fafafa" stroke="#cdcdcd" stroke-width="0.7"/><rect x="746.0" y="280.91" width="9" height="9.6" fill="none" stroke="#dedede" stroke-width="0.6"/><rect x="761.8" y="279.91" width="12" height="12" fill="none" stroke="#808080" stroke-width="2.2"/><path d="M788.5 285.90999999999997 H796.9000000000001 M792.7 281.71 V290.10999999999996" stroke="#4a6a93" stroke-width="1.5"/><path d="M787.1 285.90999999999997 L789.7 283.51 V288.30999999999995 Z M798.3000000000001 285.90999999999997 L795.7 283.51 V288.30999999999995 Z M792.7 280.30999999999995 L790.3000000000001 282.90999999999997 H795.1 Z M792.7 291.51 L790.3000000000001 288.90999999999997 H795.1 Z" fill="#4a6a93"/><rect x="968.5" y="281.21" width="9.5" height="9.5" rx="1" fill="#fff" stroke="#8c8c8c" stroke-width="0.9"/><path d="M187.5 298.85 V303.65 H182.5 Z" fill="#3a3a3a"/><path d="M198.0 296.35 L203.5 294.85 V307.35 L198.0 308.85 Z" fill="#9a5a34"/><path d="M198.0 296.35 V308.85" stroke="#6e3f22" stroke-width="1"/><rect x="394" y="294.28" width="6" height="15.14" fill="#f6c27f"/><rect x="746.0" y="294.85" width="9" height="2.2" fill="#fafafa" stroke="#cdcdcd" stroke-width="0.7"/><rect x="746.0" y="306.65" width="9" height="2.2" fill="#fafafa" stroke="#cdcdcd" stroke-width="0.7"/><rect x="743.5" y="297.35" width="2.2" height="9" fill="#fafafa" stroke="#cdcdcd" stroke-width="0.7"/><rect x="755.3" y="297.35" width="2.2" height="9" fill="#fafafa" stroke="#cdcdcd" stroke-width="0.7"/><rect x="746.0" y="297.05" width="9" height="9.6" fill="none" stroke="#dedede" stroke-width="0.6"/><rect x="746.0" y="294.85" width="9" height="1.8" fill="#5b8fc9"/><rect x="755.3" y="298.35" width="1.8" height="7" fill="#5b8fc9"/><rect x="761" y="294.85" width="14" height="14" fill="#111" stroke="#2f6d1a" stroke-width="0.8"/><rect x="763" y="296.85" width="10" height="3.5" fill="#fff"/><rect x="763" y="303.35" width="10" height="3.5" fill="#fff"/><path d="M762 301.85 H774" stroke="#3c7d24" stroke-width="1.2"/><circle cx="763.5" cy="298.65" r="1.1" fill="#63c13c"/><circle cx="763.5" cy="305.15" r="1.1" fill="#63c13c"/><circle cx="772.5" cy="298.65" r="1.1" fill="#63c13c"/><circle cx="772.5" cy="305.15" r="1.1" fill="#63c13c"/><path d="M788.5 302.04999999999995 H796.9000000000001 M792.7 297.84999999999997 V306.24999999999994" stroke="#4a6a93" stroke-width="1.5"/><path d="M787.1 302.04999999999995 L789.7 299.65 V304.44999999999993 Z M798.3000000000001 302.04999999999995 L795.7 299.65 V304.44999999999993 Z M792.7 296.44999999999993 L790.3000000000001 299.04999999999995 H795.1 Z M792.7 307.65 L790.3000000000001 305.04999999999995 H795.1 Z" fill="#4a6a93"/><rect x="968.5" y="297.35" width="9.5" height="9.5" rx="1" fill="#fff" stroke="#8c8c8c" stroke-width="0.9"/><rect x="968.5" y="313.49" width="9.5" height="9.5" rx="1" fill="#fff" stroke="#8c8c8c" stroke-width="0.9"/><rect x="968.5" y="329.63" width="9.5" height="9.5" rx="1" fill="#fff" stroke="#8c8c8c" stroke-width="0.9"/><path d="M187.5 347.27 V352.07 H182.5 Z" fill="#3a3a3a"/><rect x="196.3" y="345.97" width="8.5" height="8" rx="1.5" fill="#d4d4d4"/><rect x="198.5" y="344.97" width="4" height="1.5" fill="#d4d4d4"/><circle cx="200.55" cy="350.07" r="2.3" fill="#f0f0f0"/><rect x="746.0" y="343.27" width="9" height="2.2" fill="#fafafa" stroke="#cdcdcd" stroke-width="0.7"/><rect x="746.0" y="355.07" width="9" height="2.2" fill="#fafafa" stroke="#cdcdcd" stroke-width="0.7"/><rect x="743.5" y="345.77" width="2.2" height="9" fill="#fafafa" stroke="#cdcdcd" stroke-width="0.7"/><rect x="755.3" y="345.77" width="2.2" height="9" fill="#fafafa" stroke="#cdcdcd" stroke-width="0.7"/><rect x="746.0" y="345.47" width="9" height="9.6" fill="none" stroke="#dedede" stroke-width="0.6"/><rect x="761.8" y="344.47" width="12" height="12" fill="none" stroke="#808080" stroke-width="2.2"/><rect x="968.5" y="345.77" width="9.5" height="9.5" rx="1" fill="#fff" stroke="#8c8c8c" stroke-width="0.9"/><path d="M200.5 363.41 V368.21 H195.5 Z" fill="#3a3a3a"/><path d="M210.0 367.41 L212.0 369.41 M213.0 365.41 V370.41 M215.0 363.41 V368.41 M218.0 361.41 V365.41" stroke="#9a9a9a" stroke-width="0.8"/><rect x="746.0" y="359.41" width="9" height="2.2" fill="#fafafa" stroke="#cdcdcd" stroke-width="0.7"/><rect x="746.0" y="371.21" width="9" height="2.2" fill="#fafafa" stroke="#cdcdcd" stroke-width="0.7"/><rect x="743.5" y="361.91" width="2.2" height="9" fill="#fafafa" stroke="#cdcdcd" stroke-width="0.7"/><rect x="755.3" y="361.91" width="2.2" height="9" fill="#fafafa" stroke="#cdcdcd" stroke-width="0.7"/><rect x="746.0" y="361.61" width="9" height="9.6" fill="none" stroke="#dedede" stroke-width="0.6"/><rect x="761.8" y="360.61" width="12" height="12" fill="none" stroke="#808080" stroke-width="2.2"/><rect x="968.5" y="361.91" width="9.5" height="9.5" rx="1" fill="#fff" stroke="#8c8c8c" stroke-width="0.9"/><path d="M222.5 381.05 L234.0 385.05 M223.5 383.55 L235.0 388.05" stroke="#2e2e2e" stroke-width="1.4"/><rect x="968.5" y="378.05" width="9.5" height="9.5" rx="1" fill="#fff" stroke="#8c8c8c" stroke-width="0.9"/><path d="M187.5 395.69 V400.49 H182.5 Z" fill="#3a3a3a"/><path d="M196.0 392.69 H200.0 L201.0 393.69 V403.69 H197.0 Z" fill="#f1f1f1" stroke="#dcdcdc" stroke-width="0.7"/><path d="M198.0 402.69 L200.0 404.69" stroke="#9a9a9a" stroke-width="0.8"/><rect x="394" y="391.12" width="6" height="15.14" fill="#b07a3a"/><rect x="746.0" y="391.69" width="9" height="2.2" fill="#fafafa" stroke="#cdcdcd" stroke-width="0.7"/><rect x="746.0" y="403.49" width="9" height="2.2" fill="#fafafa" stroke="#cdcdcd" stroke-width="0.7"/><rect x="743.5" y="394.19" width="2.2" height="9" fill="#fafafa" stroke="#cdcdcd" stroke-width="0.7"/><rect x="755.3" y="394.19" width="2.2" height="9" fill="#fafafa" stroke="#cdcdcd" stroke-width="0.7"/><rect x="746.0" y="393.89" width="9" height="9.6" fill="none" stroke="#dedede" stroke-width="0.6"/><rect x="761.8" y="392.89" width="12" height="12" fill="none" stroke="#808080" stroke-width="2.2"/><rect x="968.5" y="394.19" width="9.5" height="9.5" rx="1" fill="#fff" stroke="#8c8c8c" stroke-width="0.9"/><rect x="208.2" y="412.03" width="11.6" height="5.6" fill="#c9c9c9"/><rect x="746.0" y="407.83" width="9" height="2.2" fill="#fafafa" stroke="#cdcdcd" stroke-width="0.7"/><rect x="746.0" y="419.63" width="9" height="2.2" fill="#fafafa" stroke="#cdcdcd" stroke-width="0.7"/><rect x="743.5" y="410.33" width="2.2" height="9" fill="#fafafa" stroke="#cdcdcd" stroke-width="0.7"/><rect x="755.3" y="410.33" width="2.2" height="9" fill="#fafafa" stroke="#cdcdcd" stroke-width="0.7"/><rect x="746.0" y="410.03" width="9" height="9.6" fill="none" stroke="#dedede" stroke-width="0.6"/><rect x="761.8" y="409.03" width="12" height="12" fill="none" stroke="#808080" stroke-width="2.2"/><path d="M788.5 415.03 H796.9000000000001 M792.7 410.83 V419.22999999999996" stroke="#4a6a93" stroke-width="1.5"/><path d="M787.1 415.03 L789.7 412.63 V417.42999999999995 Z M798.3000000000001 415.03 L795.7 412.63 V417.42999999999995 Z M792.7 409.42999999999995 L790.3000000000001 412.03 H795.1 Z M792.7 420.63 L790.3000000000001 418.03 H795.1 Z" fill="#4a6a93"/><rect x="968.5" y="410.33" width="9.5" height="9.5" rx="1" fill="#fff" stroke="#8c8c8c" stroke-width="0.9"/><rect x="208.2" y="428.17" width="11.6" height="5.6" fill="#c9c9c9"/><rect x="746.0" y="423.97" width="9" height="2.2" fill="#fafafa" stroke="#cdcdcd" stroke-width="0.7"/><rect x="746.0" y="435.77" width="9" height="2.2" fill="#fafafa" stroke="#cdcdcd" stroke-width="0.7"/><rect x="743.5" y="426.47" width="2.2" height="9" fill="#fafafa" stroke="#cdcdcd" stroke-width="0.7"/><rect x="755.3" y="426.47" width="2.2" height="9" fill="#fafafa" stroke="#cdcdcd" stroke-width="0.7"/><rect x="746.0" y="426.17" width="9" height="9.6" fill="none" stroke="#dedede" stroke-width="0.6"/><rect x="761.8" y="425.17" width="12" height="12" fill="none" stroke="#808080" stroke-width="2.2"/><path d="M788.5 431.16999999999996 H796.9000000000001 M792.7 426.96999999999997 V435.36999999999995" stroke="#4a6a93" stroke-width="1.5"/><path d="M787.1 431.16999999999996 L789.7 428.77 V433.56999999999994 Z M798.3000000000001 431.16999999999996 L795.7 428.77 V433.56999999999994 Z M792.7 425.56999999999994 L790.3000000000001 428.16999999999996 H795.1 Z M792.7 436.77 L790.3000000000001 434.16999999999996 H795.1 Z" fill="#4a6a93"/><rect x="968.5" y="426.47" width="9.5" height="9.5" rx="1" fill="#fff" stroke="#8c8c8c" stroke-width="0.9"/><path d="M211.0 440.81 L216.5 441.31 L218.0 442.61 V452.61 L211.0 453.61 Z" fill="#d0d0d0"/><path d="M211.3 440.81 V453.61" stroke="#b5b5b5" stroke-width="0.9"/><rect x="746.0" y="440.11" width="9" height="2.2" fill="#fafafa" stroke="#cdcdcd" stroke-width="0.7"/><rect x="746.0" y="451.91" width="9" height="2.2" fill="#fafafa" stroke="#cdcdcd" stroke-width="0.7"/><rect x="743.5" y="442.61" width="2.2" height="9" fill="#fafafa" stroke="#cdcdcd" stroke-width="0.7"/><rect x="755.3" y="442.61" width="2.2" height="9" fill="#fafafa" stroke="#cdcdcd" stroke-width="0.7"/><rect x="746.0" y="442.31" width="9" height="9.6" fill="none" stroke="#dedede" stroke-width="0.6"/><rect x="761.8" y="441.31" width="12" height="12" fill="none" stroke="#808080" stroke-width="2.2"/><path d="M788.5 447.31 H796.9000000000001 M792.7 443.11 V451.51" stroke="#4a6a93" stroke-width="1.5"/><path d="M787.1 447.31 L789.7 444.91 V449.71 Z M798.3000000000001 447.31 L795.7 444.91 V449.71 Z M792.7 441.71 L790.3000000000001 444.31 H795.1 Z M792.7 452.91 L790.3000000000001 450.31 H795.1 Z" fill="#4a6a93"/><rect x="968.5" y="442.61" width="9.5" height="9.5" rx="1" fill="#fff" stroke="#8c8c8c" stroke-width="0.9"/><path d="M211.0 456.95 L216.5 457.45 L218.0 458.75 V468.75 L211.0 469.75 Z" fill="#d0d0d0"/><path d="M211.3 456.95 V469.75" stroke="#b5b5b5" stroke-width="0.9"/><rect x="746.0" y="456.25" width="9" height="2.2" fill="#fafafa" stroke="#cdcdcd" stroke-width="0.7"/><rect x="746.0" y="468.05" width="9" height="2.2" fill="#fafafa" stroke="#cdcdcd" stroke-width="0.7"/><rect x="743.5" y="458.75" width="2.2" height="9" fill="#fafafa" stroke="#cdcdcd" stroke-width="0.7"/><rect x="755.3" y="458.75" width="2.2" height="9" fill="#fafafa" stroke="#cdcdcd" stroke-width="0.7"/><rect x="746.0" y="458.45" width="9" height="9.6" fill="none" stroke="#dedede" stroke-width="0.6"/><rect x="761.8" y="457.45" width="12" height="12" fill="none" stroke="#808080" stroke-width="2.2"/><path d="M788.5 463.45 H796.9000000000001 M792.7 459.25 V467.65" stroke="#4a6a93" stroke-width="1.5"/><path d="M787.1 463.45 L789.7 461.05 V465.84999999999997 Z M798.3000000000001 463.45 L795.7 461.05 V465.84999999999997 Z M792.7 457.84999999999997 L790.3000000000001 460.45 H795.1 Z M792.7 469.05 L790.3000000000001 466.45 H795.1 Z" fill="#4a6a93"/><rect x="968.5" y="458.75" width="9.5" height="9.5" rx="1" fill="#fff" stroke="#8c8c8c" stroke-width="0.9"/><rect x="210.5" y="471.89" width="11" height="15" fill="#fff" opacity="0.85"/><path d="M213.0 473.39 L219.5 474.39 V483.89 L213.0 485.39 Z" fill="#bdbdbd"/><path d="M213.0 473.39 V485.39" stroke="#a0a0a0" stroke-width="0.8"/><rect x="394" y="471.82" width="6" height="15.14" fill="#b07a3a"/><rect x="746.0" y="472.39" width="9" height="2.2" fill="#fafafa" stroke="#cdcdcd" stroke-width="0.7"/><rect x="746.0" y="484.19" width="9" height="2.2" fill="#fafafa" stroke="#cdcdcd" stroke-width="0.7"/><rect x="743.5" y="474.89" width="2.2" height="9" fill="#fafafa" stroke="#cdcdcd" stroke-width="0.7"/><rect x="755.3" y="474.89" width="2.2" height="9" fill="#fafafa" stroke="#cdcdcd" stroke-width="0.7"/><rect x="746.0" y="474.59" width="9" height="9.6" fill="none" stroke="#dedede" stroke-width="0.6"/><rect x="761.8" y="473.59" width="12" height="12" fill="none" stroke="#808080" stroke-width="2.2"/><path d="M788.5 479.59 H796.9000000000001 M792.7 475.39 V483.78999999999996" stroke="#4a6a93" stroke-width="1.5"/><path d="M787.1 479.59 L789.7 477.19 V481.98999999999995 Z M798.3000000000001 479.59 L795.7 477.19 V481.98999999999995 Z M792.7 473.98999999999995 L790.3000000000001 476.59 H795.1 Z M792.7 485.19 L790.3000000000001 482.59 H795.1 Z" fill="#4a6a93"/><rect x="968.5" y="474.89" width="9.5" height="9.5" rx="1" fill="#fff" stroke="#8c8c8c" stroke-width="0.9"/><path d="M211.0 497.03 L221.0 495.03" stroke="#b0b0b0" stroke-width="1.6"/><rect x="968.5" y="491.03" width="9.5" height="9.5" rx="1" fill="#fff" stroke="#8c8c8c" stroke-width="0.9"/></svg>
<div class="a" style="left:785px;top:484.5px;width:91.5px;height:71px;background:#fff;border:1px solid #d4d9e0;box-shadow:1px 1px 2px rgba(0,0,0,0.12)"></div>
<div class="a" style="left:788px;top:488px;width:85.5px;height:14.5px;background:#aebfd8"></div>
<div class="a" style="left:788px;top:503px;width:85.5px;height:15.5px;background:#4a7fb6"></div>
<div class="t " style="left:803px;top:490.50px;color:#1f2d3d">Nenhum</div>
<div class="t " style="left:803px;top:506.00px;color:#fff">Vertical</div>
<div class="t " style="left:803px;top:522.00px;color:#1f2d3d">Horizontal</div>
<div class="a" style="left:786px;top:537px;width:89.5px;height:1px;background:#e4e7eb"></div>
<div class="a" style="left:789px;top:542.5px;width:9.5px;height:9.5px;background:#fff;border:1px solid #8c8c8c;border-radius:1px"></div>
<div class="t " style="left:801.5px;top:542.30px;color:#2a2a2a">Aplicar em todos</div>
<svg style="left:0;top:0" width="1006" height="628"><path d="M790.8 495.3 H799.2 M795 491.1 V499.5" stroke="#4d6d96" stroke-width="1.1"/><path d="M789.7 495.3 L792 493.3 V497.3 Z M800.3 495.3 L798 493.3 V497.3 Z M795 490.0 L793 492.3 H797 Z M795 500.6 L793 498.3 H797 Z" fill="#4d6d96"/><path d="M795 507.5 V514.5" stroke="#34507a" stroke-width="1.2"/><path d="M793 508 L795 505.5 L797 508 Z M793 514 L795 516.5 L797 514 Z" fill="#34507a"/><path d="M791.3 526.8 H798.3" stroke="#45618a" stroke-width="1.3"/><path d="M788.8 526.8 L791.8 524.5 V529.0999999999999 Z M800.8 526.8 L797.8 524.5 V529.0999999999999 Z" fill="#45618a"/><circle cx="867.5" cy="547.3" r="4.6" fill="#fff" stroke="#3d9be0" stroke-width="1"/><path d="M865.8 545.8 Q865.8 543.9 867.6 543.9 Q869.3 543.9 869.3 545.5 Q869.3 546.6 867.6 547.3 V548.5" fill="none" stroke="#3d9be0" stroke-width="0.9"/><circle cx="867.6" cy="550.2" r="0.6" fill="#3d9be0"/><defs><linearGradient id="ag" x1="0" y1="0" x2="1" y2="1"><stop offset="0" stop-color="#3aa3ec"/><stop offset="0.6" stop-color="#1a86d8"/><stop offset="1" stop-color="#2e97e2"/></linearGradient></defs><path d="M726 445.8 C733 439 745 438.5 756 444.5 C762 448 767 451.5 770 455 L772.2 449.7 L786 474.6 L757.5 470.3 L762 466.1 C756 460 748 453.5 740 449 C735 446.5 730 445.5 726 445.8 Z" fill="url(#ag)"/><path d="M728 446 C738 446.5 750 453 761 464" stroke="#0e68b8" stroke-width="1.2" fill="none" opacity="0.35"/></svg>
</body></html>
